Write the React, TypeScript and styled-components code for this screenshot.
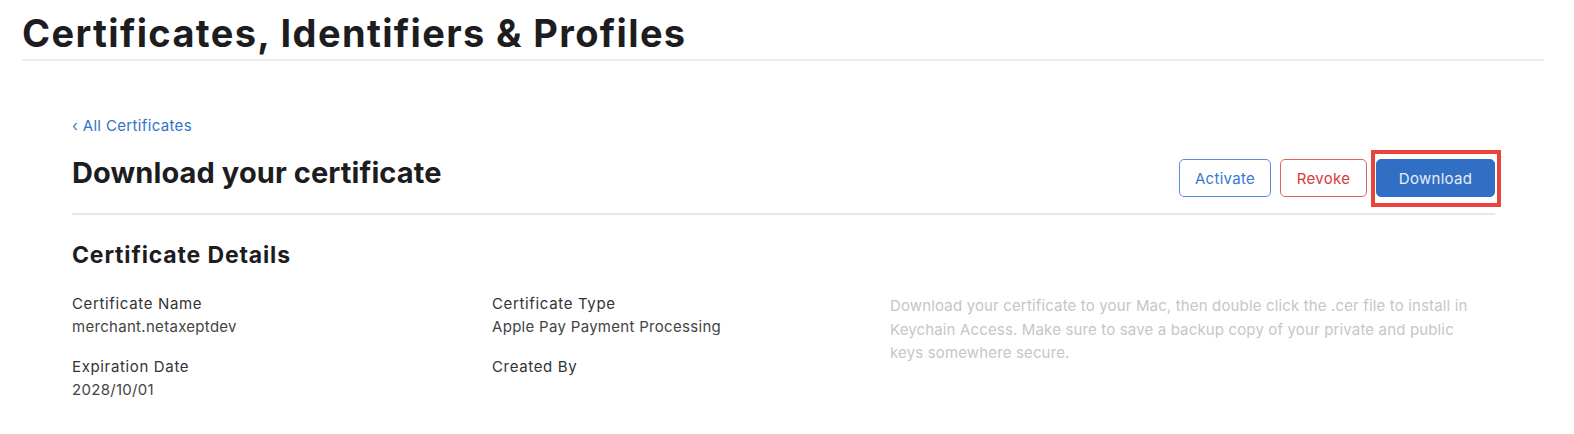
import React from "react";
import styled, { createGlobalStyle, css } from "styled-components";

const GlobalStyle = createGlobalStyle`
  html, body { margin: 0; padding: 0; background: #ffffff; }
  body { font-family: Inter, "Noto Sans", "Liberation Sans", sans-serif; -webkit-font-smoothing: antialiased; }
`;

const Page = styled.div`
  width: 1574px;
  min-height: 434px;
  background: #fff;
`;

const Header = styled.header`
  margin: 0 30px 0 22px;
  padding-top: 10px;
  padding-bottom: 3px;
  border-bottom: 2px solid #ececec;
`;

const PageTitle = styled.h1`
  margin: 0;
  font-size: 38px;
  line-height: 46px;
  font-weight: 700;
  color: #1d1d1f;
  letter-spacing: 1.35px;
`;

const Main = styled.main`
  padding: 55px 79px 0 72px;
`;

const BackLink = styled.a`
  display: block;
  font-size: 15px;
  line-height: 20px;
  color: #2f74c8;
  letter-spacing: 0.35px;
  text-decoration: none;
  cursor: pointer;
`;

const TitleRow = styled.div`
  display: flex;
  justify-content: space-between;
  align-items: flex-start;
  margin-top: 20px;
  padding-bottom: 16px;
  border-bottom: 2px solid #e8e8e8;
`;

const SectionTitle = styled.h2`
  margin: 0;
  font-size: 29px;
  line-height: 34px;
  font-weight: 700;
  color: #1d1d1f;
  letter-spacing: 0.1px;
`;

const Actions = styled.div`
  display: flex;
  gap: 9px;
  margin-top: 3px;
`;

type Variant = "outline" | "danger" | "primary";

const Button = styled.button<{ $variant: Variant; $width: number; $marked?: boolean }>`
  position: relative;
  box-sizing: border-box;
  height: 38px;
  width: ${(p) => p.$width}px;
  border-radius: 5px;
  font-family: inherit;
  font-size: 15px;
  font-weight: 400;
  letter-spacing: 0.3px;
  cursor: pointer;
  padding: 0;
  ${(p) =>
    p.$variant === "outline" &&
    css`
      background: #fff;
      color: #3779d2;
      border: 1px solid #5b8fdb;
    `}
  ${(p) =>
    p.$variant === "danger" &&
    css`
      background: #fff;
      color: #d8383b;
      border: 1px solid #e06466;
    `}
  ${(p) =>
    p.$variant === "primary" &&
    css`
      background: #316fc4;
      color: #e6edf8;
      border: 1px solid #316fc4;
    `}
  ${(p) =>
    p.$marked &&
    css`
      &::after {
        content: "";
        position: absolute;
        top: -10px;
        bottom: -11px;
        left: -6px;
        right: -7px;
        border: 4px solid #e8443b;
        pointer-events: none;
      }
    `}
`;

const DetailsTitle = styled.h3`
  margin: 26px 0 0;
  font-size: 23px;
  line-height: 28px;
  font-weight: 700;
  color: #1d1d1f;
  letter-spacing: 0.85px;
`;

const DetailsGrid = styled.div`
  display: grid;
  grid-template-columns: 420px 398px 1fr;
  margin-top: 23px;
`;

const FieldColumn = styled.div`
  display: flex;
  flex-direction: column;
  gap: 17px;
`;

const Field = styled.div`
  display: flex;
  flex-direction: column;
`;

const Label = styled.div`
  font-size: 15px;
  line-height: 23px;
  color: #333333;
  letter-spacing: 0.65px;
`;

const Value = styled.div`
  font-size: 15px;
  line-height: 23px;
  color: #444444;
  letter-spacing: 0.3px;
  min-height: 23px;
`;

const HelpText = styled.p`
  margin: 2px 0 0;
  max-width: 597px;
  font-size: 15px;
  line-height: 23.5px;
  color: #c6c6c6;
  letter-spacing: 0.15px;
`;

export default function App() {
  return (
    <Page>
      <GlobalStyle />
      <Header>
        <PageTitle>Certificates, Identifiers &amp; Profiles</PageTitle>
      </Header>
      <Main>
        <BackLink>‹ All Certificates</BackLink>
        <TitleRow>
          <SectionTitle>Download your certificate</SectionTitle>
          <Actions>
            <Button $variant="outline" $width={92}>Activate</Button>
            <Button $variant="danger" $width={87}>Revoke</Button>
            <Button $variant="primary" $width={119} $marked>Download</Button>
          </Actions>
        </TitleRow>
        <DetailsTitle>Certificate Details</DetailsTitle>
        <DetailsGrid>
          <FieldColumn>
            <Field>
              <Label>Certificate Name</Label>
              <Value>merchant.netaxeptdev</Value>
            </Field>
            <Field>
              <Label>Expiration Date</Label>
              <Value>2028/10/01</Value>
            </Field>
          </FieldColumn>
          <FieldColumn>
            <Field>
              <Label>Certificate Type</Label>
              <Value>Apple Pay Payment Processing</Value>
            </Field>
            <Field>
              <Label>Created By</Label>
              <Value></Value>
            </Field>
          </FieldColumn>
          <HelpText>
            Download your certificate to your Mac, then double click the .cer file to install in
            Keychain Access. Make sure to save a backup copy of your private and public keys
            somewhere secure.
          </HelpText>
        </DetailsGrid>
      </Main>
    </Page>
  );
}
